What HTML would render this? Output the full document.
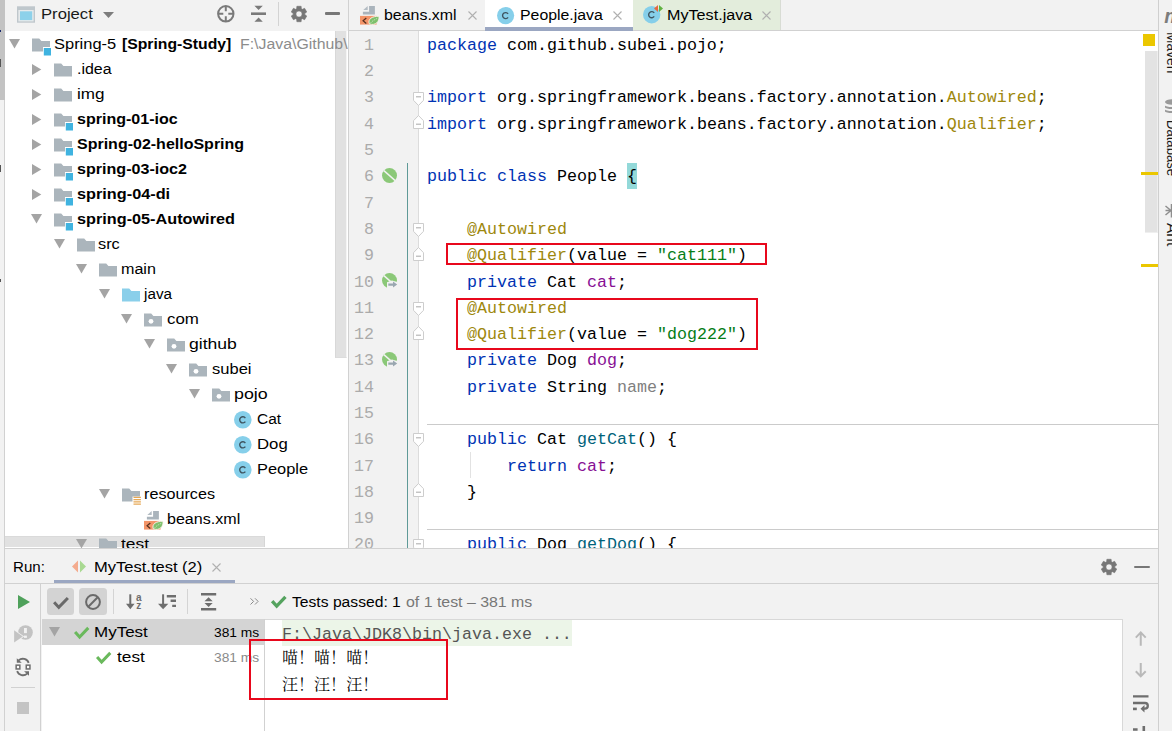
<!DOCTYPE html>
<html lang="zh">
<head>
<meta charset="utf-8">
<title>People.java - Spring-5</title>
<style>
*{box-sizing:border-box;margin:0;padding:0}
html,body{width:1172px;height:731px;overflow:hidden;background:#fff}
body{position:relative;font-family:"Liberation Sans","Noto Sans CJK SC",sans-serif;font-size:15.5px;color:#000}
.abs{position:absolute}
svg{position:absolute;overflow:visible}
/* left strip */
#lstrip{left:0;top:0;width:5px;height:731px;background:#f2f2f2;border-right:1px solid #d1d1d1}
#lstrip .dark{left:0;top:0;width:5px;height:100px;background:#c3c3c3}
/* project panel */
#proj{left:5px;top:0;width:343px;height:548px;background:#fff;overflow:hidden}
#projhead{left:-1px;top:0;width:343px;height:30.7px;background:#f2f2f2}
.row{position:absolute;left:0;width:342px;height:25px;line-height:25px;white-space:nowrap}
.row span.t{position:absolute;top:0}
.tx{position:absolute;white-space:pre;transform-origin:0 50%}
.b{font-weight:bold}
.g{color:#8c8c8c}
/* editor */
#vsep{left:348px;top:0;width:1px;height:548px;background:#d1d1d1}
#tabs{left:349px;top:0;width:809px;height:31px;background:#f2f2f2;border-bottom:1px solid #d1d1d1}
.tab{position:absolute;top:0;height:30px;line-height:29px;white-space:nowrap}
#editor{left:349px;top:31px;width:809px;height:517px;background:#fff;overflow:hidden}
.ln{position:absolute;left:0;width:25px;text-align:right;color:#ababab;font-family:"Liberation Mono",monospace;font-size:16.6px;height:26px;line-height:26px}
.cl{position:absolute;left:78px;white-space:pre;font-family:"Liberation Mono",monospace;font-size:16.67px;height:26px;line-height:26px;color:#000}
.k{color:#0033b3}.a{color:#9e880d}.s{color:#067d17}.f{color:#871094}.m{color:#00627a}.u{color:#808080}
/* right strip */
#rstrip{left:1158px;top:0;width:14px;overflow:hidden;height:731px;background:#f2f2f2;box-shadow:inset 1px 0 0 #cfcfcf}
/* bottom */
#bottom{left:5px;top:548px;width:1153px;height:183px;background:#f2f2f2;box-shadow:inset 0 1px 0 #d1d1d1}
.mono{font-family:"Liberation Mono","Noto Sans CJK SC",monospace}
</style>
</head>
<body>
<div id="lstrip" class="abs"><div class="dark abs"></div><div class="abs" style="left:0;top:29.6px;width:1.2px;height:2.7px;background:#1a2a6c"></div><div class="abs" style="left:0;top:59px;width:1px;height:7.6px;background:#555"></div><div class="abs" style="left:0;top:165px;width:1px;height:7px;background:#555"></div><div class="abs" style="left:0;top:279px;width:1px;height:3px;background:#555"></div></div>

<div id="proj" class="abs">
<div class="abs" style="left:1px;top:0;width:342px;height:548px">
<div id="projhead" class="abs"></div>
<svg style="left:11px;top:6px" width="18" height="17" viewBox="0 0 18 17"><rect x="0" y="0.3" width="18" height="16.4" fill="#bfc7cc"/><rect x="1.4" y="4" width="15.2" height="11.4" fill="#e6eaec"/><rect x="3" y="5.3" width="12.2" height="8.8" fill="#8dd1ea"/></svg><div class="tx" style="left:35.0px;top:-0.9px;height:29px;line-height:29px;font-size:15.5px;transform:scaleX(1.0738);color:#1a1a1a">Project</div><svg style="left:97px;top:12px" width="11" height="6" viewBox="0 0 11 6"><path d="M0 0H11L5.5 6Z" fill="#7d7d7d"/></svg><svg style="left:211.3px;top:5.1px" width="17.6" height="17.6" viewBox="0 0 17.6 17.6"><circle cx="8.8" cy="8.8" r="7.7" fill="none" stroke="#7a7a7a" stroke-width="2"/><path d="M8.8 1V6.3M8.8 11.3V16.6M1 8.8H6.3M11.3 8.8H16.6" stroke="#7a7a7a" stroke-width="2"/></svg><svg style="left:244.6px;top:6px" width="15" height="15.6" viewBox="0 0 15 15.6"><path d="M0 7.7H15" stroke="#7a7a7a" stroke-width="2.6"/><path d="M3.4 -0.2H11.8L7.6 4Z M3.4 15.8H11.8L7.6 11.5Z" fill="#7a7a7a"/></svg><div class="abs" style="left:272px;top:2px;width:1px;height:24px;background:#d3d3d3"></div><svg style="left:285px;top:5.8px" width="16" height="16" viewBox="0 0 16 16"><path d="M5.87 0.29L10.13 0.29L10.37 2.70L11.40 3.30L13.61 2.30L15.74 5.99L13.77 7.40L13.77 8.60L15.74 10.01L13.61 13.70L11.40 12.70L10.37 13.30L10.13 15.71L5.87 15.71L5.63 13.30L4.60 12.70L2.39 13.70L0.26 10.01L2.23 8.60L2.23 7.40L0.26 5.99L2.39 2.30L4.60 3.30L5.63 2.70Z M8 4.9A3.1 3.1 0 1 0 8 11.1A3.1 3.1 0 1 0 8 4.9Z" fill="#777" fill-rule="evenodd" stroke="#777" stroke-width="0.6" stroke-linejoin="round"/></svg><div class="abs" style="left:318.5px;top:12.3px;width:15.2px;height:2.6px;border-radius:1px;background:#777"></div><div class="abs" style="left:329.1px;top:30.7px;width:12px;height:327px;background:#e1e1e1;border-left:0.8px solid #d8d8d8;border-bottom:1.5px solid #dcdcdc;border-right:1.2px solid #f4f4f4"></div>
<svg style="left:3.1px;top:38.8px" width="11" height="9" viewBox="0 0 11 9"><path d="M0 0H11L5.5 9.4Z" fill="#a4a4a4"/></svg><svg style="left:26px;top:37.5px" width="19" height="18" viewBox="0 0 19 18"><path d="M0 0.5H7.2L9.4 3H18V9H11V13.5H0Z" fill="#abb5bc"/><rect x="11.8" y="10" width="7.2" height="7.5" fill="#3fb3e0"/></svg><div class="tx" style="left:48.3px;top:31.4px;height:25px;line-height:25px;font-size:15.5px;transform:scaleX(1.0617)">Spring-5</div><div class="tx" style="left:115.9px;top:31.4px;height:25px;line-height:25px;font-size:15.5px;transform:scaleX(1.0156);font-weight:bold">[Spring-Study]</div><div class="tx" style="left:233.9px;top:31.4px;height:25px;line-height:25px;font-size:15.5px;transform:scaleX(1.0238);color:#8c8c8c">F:\Java\Github\</div>
<svg style="left:26.2px;top:64px" width="9" height="11" viewBox="0 0 9 11"><path d="M0 0V11L9.3 5.5Z" fill="#a4a4a4"/></svg><svg style="left:48px;top:62.5px" width="18" height="14" viewBox="0 0 18 14"><path d="M0 0.5H7.2L9.4 3H18V13.5H0Z" fill="#abb5bc"/></svg><div class="tx" style="left:70.8px;top:56.4px;height:25px;line-height:25px;font-size:15.5px;transform:scaleX(1.0294)">.idea</div>
<svg style="left:26.2px;top:89px" width="9" height="11" viewBox="0 0 9 11"><path d="M0 0V11L9.3 5.5Z" fill="#a4a4a4"/></svg><svg style="left:48px;top:87.5px" width="18" height="14" viewBox="0 0 18 14"><path d="M0 0.5H7.2L9.4 3H18V13.5H0Z" fill="#abb5bc"/></svg><div class="tx" style="left:70.8px;top:81.4px;height:25px;line-height:25px;font-size:15.5px;transform:scaleX(1.1011)">img</div>
<svg style="left:26.2px;top:114px" width="9" height="11" viewBox="0 0 9 11"><path d="M0 0V11L9.3 5.5Z" fill="#a4a4a4"/></svg><svg style="left:48px;top:112.5px" width="19" height="18" viewBox="0 0 19 18"><path d="M0 0.5H7.2L9.4 3H18V9H11V13.5H0Z" fill="#abb5bc"/><rect x="11.8" y="10" width="7.2" height="7.5" fill="#3fb3e0"/></svg><div class="tx" style="left:70.8px;top:106.4px;height:25px;line-height:25px;font-size:15.5px;transform:scaleX(1.0347);font-weight:bold">spring-01-ioc</div>
<svg style="left:26.2px;top:139px" width="9" height="11" viewBox="0 0 9 11"><path d="M0 0V11L9.3 5.5Z" fill="#a4a4a4"/></svg><svg style="left:48px;top:137.5px" width="19" height="18" viewBox="0 0 19 18"><path d="M0 0.5H7.2L9.4 3H18V9H11V13.5H0Z" fill="#abb5bc"/><rect x="11.8" y="10" width="7.2" height="7.5" fill="#3fb3e0"/></svg><div class="tx" style="left:70.6px;top:131.4px;height:25px;line-height:25px;font-size:15.5px;transform:scaleX(1.0321);font-weight:bold">Spring-02-helloSpring</div>
<svg style="left:26.2px;top:164px" width="9" height="11" viewBox="0 0 9 11"><path d="M0 0V11L9.3 5.5Z" fill="#a4a4a4"/></svg><svg style="left:48px;top:162.5px" width="19" height="18" viewBox="0 0 19 18"><path d="M0 0.5H7.2L9.4 3H18V9H11V13.5H0Z" fill="#abb5bc"/><rect x="11.8" y="10" width="7.2" height="7.5" fill="#3fb3e0"/></svg><div class="tx" style="left:70.6px;top:156.4px;height:25px;line-height:25px;font-size:15.5px;transform:scaleX(1.0383);font-weight:bold">spring-03-ioc2</div>
<svg style="left:26.2px;top:189px" width="9" height="11" viewBox="0 0 9 11"><path d="M0 0V11L9.3 5.5Z" fill="#a4a4a4"/></svg><svg style="left:48px;top:187.5px" width="19" height="18" viewBox="0 0 19 18"><path d="M0 0.5H7.2L9.4 3H18V9H11V13.5H0Z" fill="#abb5bc"/><rect x="11.8" y="10" width="7.2" height="7.5" fill="#3fb3e0"/></svg><div class="tx" style="left:70.6px;top:181.4px;height:25px;line-height:25px;font-size:15.5px;transform:scaleX(1.0496);font-weight:bold">spring-04-di</div>
<svg style="left:25.1px;top:213.8px" width="11" height="9" viewBox="0 0 11 9"><path d="M0 0H11L5.5 9.4Z" fill="#a4a4a4"/></svg><svg style="left:48px;top:212.5px" width="19" height="18" viewBox="0 0 19 18"><path d="M0 0.5H7.2L9.4 3H18V9H11V13.5H0Z" fill="#abb5bc"/><rect x="11.8" y="10" width="7.2" height="7.5" fill="#3fb3e0"/></svg><div class="tx" style="left:70.6px;top:206.4px;height:25px;line-height:25px;font-size:15.5px;transform:scaleX(1.0478);font-weight:bold">spring-05-Autowired</div>
<svg style="left:48.1px;top:238.8px" width="11" height="9" viewBox="0 0 11 9"><path d="M0 0H11L5.5 9.4Z" fill="#a4a4a4"/></svg><svg style="left:71px;top:237.5px" width="18" height="14" viewBox="0 0 18 14"><path d="M0 0.5H7.2L9.4 3H18V13.5H0Z" fill="#abb5bc"/></svg><div class="tx" style="left:92.1px;top:231.4px;height:25px;line-height:25px;font-size:15.5px;transform:scaleX(1.0551)">src</div>
<svg style="left:70.1px;top:263.8px" width="11" height="9" viewBox="0 0 11 9"><path d="M0 0H11L5.5 9.4Z" fill="#a4a4a4"/></svg><svg style="left:93px;top:262.5px" width="18" height="14" viewBox="0 0 18 14"><path d="M0 0.5H7.2L9.4 3H18V13.5H0Z" fill="#abb5bc"/></svg><div class="tx" style="left:115.4px;top:256.4px;height:25px;line-height:25px;font-size:15.5px;transform:scaleX(1.0388)">main</div>
<svg style="left:93.1px;top:288.8px" width="11" height="9" viewBox="0 0 11 9"><path d="M0 0H11L5.5 9.4Z" fill="#a4a4a4"/></svg><svg style="left:116px;top:287.5px" width="18" height="14" viewBox="0 0 18 14"><path d="M0 0.5H7.2L9.4 3H18V13.5H0Z" fill="#8acfea"/></svg><div class="tx" style="left:137.6px;top:281.4px;height:25px;line-height:25px;font-size:15.5px;transform:scaleX(0.9847)">java</div>
<svg style="left:115.1px;top:313.8px" width="11" height="9" viewBox="0 0 11 9"><path d="M0 0H11L5.5 9.4Z" fill="#a4a4a4"/></svg><svg style="left:138px;top:312.5px" width="18" height="14" viewBox="0 0 18 14"><path d="M0 0.5H7.2L9.4 3H18V13.5H0Z" fill="#abb5bc"/><circle cx="7" cy="8.3" r="2.4" fill="#fff"/></svg><div class="tx" style="left:160.6px;top:306.4px;height:25px;line-height:25px;font-size:15.5px;transform:scaleX(1.0894)">com</div>
<svg style="left:138.1px;top:338.8px" width="11" height="9" viewBox="0 0 11 9"><path d="M0 0H11L5.5 9.4Z" fill="#a4a4a4"/></svg><svg style="left:161px;top:337.5px" width="18" height="14" viewBox="0 0 18 14"><path d="M0 0.5H7.2L9.4 3H18V13.5H0Z" fill="#abb5bc"/><circle cx="7" cy="8.3" r="2.4" fill="#fff"/></svg><div class="tx" style="left:182.5px;top:331.4px;height:25px;line-height:25px;font-size:15.5px;transform:scaleX(1.1342)">github</div>
<svg style="left:160.1px;top:363.8px" width="11" height="9" viewBox="0 0 11 9"><path d="M0 0H11L5.5 9.4Z" fill="#a4a4a4"/></svg><svg style="left:183px;top:362.5px" width="18" height="14" viewBox="0 0 18 14"><path d="M0 0.5H7.2L9.4 3H18V13.5H0Z" fill="#abb5bc"/><circle cx="7" cy="8.3" r="2.4" fill="#fff"/></svg><div class="tx" style="left:205.5px;top:356.4px;height:25px;line-height:25px;font-size:15.5px;transform:scaleX(1.0660)">subei</div>
<svg style="left:183.1px;top:388.8px" width="11" height="9" viewBox="0 0 11 9"><path d="M0 0H11L5.5 9.4Z" fill="#a4a4a4"/></svg><svg style="left:206px;top:387.5px" width="18" height="14" viewBox="0 0 18 14"><path d="M0 0.5H7.2L9.4 3H18V13.5H0Z" fill="#abb5bc"/><circle cx="7" cy="8.3" r="2.4" fill="#fff"/></svg><div class="tx" style="left:227.7px;top:381.4px;height:25px;line-height:25px;font-size:15.5px;transform:scaleX(1.1500)">pojo</div>
<svg style="left:228px;top:411px" width="17.6" height="17.6" viewBox="0 0 16 16"><circle cx="8" cy="8" r="8" fill="#86cfea"/><path d="M10.3 6.4A2.8 2.8 0 1 0 10.3 9.6" fill="none" stroke="#3f5561" stroke-width="1.3"/></svg><div class="tx" style="left:250.7px;top:406.4px;height:25px;line-height:25px;font-size:15.5px;transform:scaleX(0.9992)">Cat</div>
<svg style="left:228px;top:436px" width="17.6" height="17.6" viewBox="0 0 16 16"><circle cx="8" cy="8" r="8" fill="#86cfea"/><path d="M10.3 6.4A2.8 2.8 0 1 0 10.3 9.6" fill="none" stroke="#3f5561" stroke-width="1.3"/></svg><div class="tx" style="left:250.7px;top:431.4px;height:25px;line-height:25px;font-size:15.5px;transform:scaleX(1.0797)">Dog</div>
<svg style="left:228px;top:461px" width="17.6" height="17.6" viewBox="0 0 16 16"><circle cx="8" cy="8" r="8" fill="#86cfea"/><path d="M10.3 6.4A2.8 2.8 0 1 0 10.3 9.6" fill="none" stroke="#3f5561" stroke-width="1.3"/></svg><div class="tx" style="left:250.7px;top:456.4px;height:25px;line-height:25px;font-size:15.5px;transform:scaleX(1.0567)">People</div>
<svg style="left:93.1px;top:488.8px" width="11" height="9" viewBox="0 0 11 9"><path d="M0 0H11L5.5 9.4Z" fill="#a4a4a4"/></svg><svg style="left:116px;top:487.5px" width="19" height="19" viewBox="0 0 19 19"><path d="M0 0.5H7.2L9.4 3H18V8.5H10.5V13.5H0Z" fill="#abb5bc"/><path d="M11.5 9.3H18.9M11.5 11.6H18.9M11.5 13.9H18.9M11.5 16.2H18.9" stroke="#e6a855" stroke-width="1.3"/></svg><div class="tx" style="left:137.6px;top:481.4px;height:25px;line-height:25px;font-size:15.5px;transform:scaleX(1.0433)">resources</div>
<svg style="left:138px;top:511.2px" width="19.2" height="18.6" viewBox="0 0 19.2 18.6"><path d="M3.3 4.1L7.7 0V4.1Z" fill="#b3bcc3"/><path d="M9.1 0H14.9V8.6H2.9V5.8H9.1Z" fill="#aab4bc"/><rect x="0" y="9.9" width="16.6" height="8.7" fill="#f39468"/><path d="M6.3 12L3.1 14.8L6.3 17.5" fill="none" stroke="#54301f" stroke-width="1.25"/><path d="M9.3 17.9C7.6 13 12 10.3 19 10.2C19.6 15.6 15.6 20 9.3 17.9Z" fill="#7ec06c" stroke="#fdf3ee" stroke-width="0.9"/><path d="M10.3 17.3C12 15.2 14.5 13.6 17.2 12.4" fill="none" stroke="#d6ecd0" stroke-width="0.7" stroke-dasharray="1.6 0.8"/></svg><div class="tx" style="left:160.6px;top:506.4px;height:25px;line-height:25px;font-size:15.5px;transform:scaleX(1.0362)">beans.xml</div>
<div class="abs" style="left:-1px;top:536px;width:260px;height:11px;background:#e1e1e1;border-right:1px solid #d6d6d6;border-top:1px solid #dadada"></div><svg style="left:70.1px;top:538.8px" width="11" height="9" viewBox="0 0 11 9"><path d="M0 0H11L5.5 9.4Z" fill="#a4a4a4"/></svg><svg style="left:93px;top:537.5px" width="18" height="14" viewBox="0 0 18 14"><path d="M0 0.5H7.2L9.4 3H18V13.5H0Z" fill="#abb5bc"/></svg><div class="tx" style="left:115.4px;top:531.4px;height:25px;line-height:25px;font-size:15.5px;transform:scaleX(1.1208)">test</div>
</div>
</div>

<div id="vsep" class="abs"></div>
<div id="tabs" class="abs">
<svg style="left:11px;top:6.3px" width="19.2" height="18.6" viewBox="0 0 19.2 18.6"><path d="M3.3 4.1L7.7 0V4.1Z" fill="#b3bcc3"/><path d="M9.1 0H14.9V8.6H2.9V5.8H9.1Z" fill="#aab4bc"/><rect x="0" y="9.9" width="16.6" height="8.7" fill="#f39468"/><path d="M6.3 12L3.1 14.8L6.3 17.5" fill="none" stroke="#54301f" stroke-width="1.25"/><path d="M9.3 17.9C7.6 13 12 10.3 19 10.2C19.6 15.6 15.6 20 9.3 17.9Z" fill="#7ec06c" stroke="#fdf3ee" stroke-width="0.9"/><path d="M10.3 17.3C12 15.2 14.5 13.6 17.2 12.4" fill="none" stroke="#d6ecd0" stroke-width="0.7" stroke-dasharray="1.6 0.8"/></svg><div class="tx" style="left:34.7px;top:0.0px;height:29px;line-height:29px;font-size:15.5px;transform:scaleX(1.0277)">beans.xml</div><svg style="left:118.5px;top:10.5px" width="9" height="9" viewBox="0 0 9 9"><path d="M0.5 0.5L8.5 8.5M8.5 0.5L0.5 8.5" stroke="#b0b0b0" stroke-width="1.1"/></svg><div class="abs" style="left:136px;top:0;width:147.5px;height:31px;background:#fff;border-bottom:4px solid #9ba7c2"></div><svg style="left:148px;top:6.5px" width="17.2" height="17.2" viewBox="0 0 16 16"><circle cx="8" cy="8" r="8" fill="#86cfea"/><path d="M10.3 6.4A2.8 2.8 0 1 0 10.3 9.6" fill="none" stroke="#3f5561" stroke-width="1.3"/></svg><div class="tx" style="left:171.2px;top:0.0px;height:29px;line-height:29px;font-size:15.5px;transform:scaleX(1.0222)">People.java</div><svg style="left:264px;top:10.5px" width="9" height="9" viewBox="0 0 9 9"><path d="M0.5 0.5L8.5 8.5M8.5 0.5L0.5 8.5" stroke="#b0b0b0" stroke-width="1.1"/></svg><div class="abs" style="left:283.5px;top:0;width:148.5px;height:30px;background:#e3eddc;border-right:1px solid #d8dcd4"></div><svg style="left:294.29999999999995px;top:6px" width="17.4" height="17.4" viewBox="0 0 16 16"><circle cx="8" cy="8" r="8" fill="#86cfea"/><path d="M10.3 6.4A2.8 2.8 0 1 0 10.3 9.6" fill="none" stroke="#3f5561" stroke-width="1.3"/></svg><svg style="left:304.5px;top:4.5px" width="9" height="7" viewBox="0 0 9 7"><path d="M0 3.5L4 0V7Z" fill="#e8683f"/><path d="M9 3.5L5 0V7Z" fill="#5fb23f"/></svg><div class="tx" style="left:318.1px;top:0.0px;height:29px;line-height:29px;font-size:15.5px;transform:scaleX(1.0424)">MyTest.java</div><svg style="left:413px;top:10.5px" width="9" height="9" viewBox="0 0 9 9"><path d="M0.5 0.5L8.5 8.5M8.5 0.5L0.5 8.5" stroke="#b0b0b0" stroke-width="1.1"/></svg>
</div>
<div id="editor" class="abs">
<div class="abs" style="left:0;top:0;width:69px;height:518px;background:#f2f2f2"></div><div class="abs" style="left:57.8px;top:131.8px;width:1.4px;height:387px;background:#5f9a98"></div><svg style="left:32.9px;top:136.8px" width="15" height="15" viewBox="0 0 15 15"><circle cx="7.5" cy="7.5" r="7.5" fill="#8bc878"/><path d="M1.6 2.4L13.2 12.6" stroke="#f2f2f2" stroke-width="1.4"/></svg><svg style="left:32.9px;top:241.9px" width="16" height="15" viewBox="0 0 16 15"><circle cx="7.5" cy="7.5" r="7.5" fill="#8bc878"/><path d="M1.6 2.4L13.2 12.6" stroke="#f2f2f2" stroke-width="1.4"/><path d="M5 16V9.2L10 7.4L16 9.2V16Z" fill="#f2f2f2"/><path d="M6.3 10.6H11V8.6L15.2 11.6L11 14.6V12.7H6.3Z" fill="#9aa7b0"/></svg><svg style="left:32.9px;top:320.7px" width="16" height="15" viewBox="0 0 16 15"><circle cx="7.5" cy="7.5" r="7.5" fill="#8bc878"/><path d="M1.6 2.4L13.2 12.6" stroke="#f2f2f2" stroke-width="1.4"/><path d="M5 16V9.2L10 7.4L16 9.2V16Z" fill="#f2f2f2"/><path d="M6.3 10.6H11V8.6L15.2 11.6L11 14.6V12.7H6.3Z" fill="#9aa7b0"/></svg><div class="abs" style="left:277.8px;top:132.0px;width:10.2px;height:26.2px;background:#93d9d9"></div><div class="ln" style="top:1.90px">1</div><div class="cl" style="top:1.90px"><span class="k">package</span> com.github.subei.pojo;</div>
<div class="ln" style="top:28.19px">2</div><div class="cl" style="top:28.19px"></div>
<div class="ln" style="top:54.48px">3</div><div class="cl" style="top:54.48px"><span class="k">import</span> org.springframework.beans.factory.annotation.<span class="a">Autowired</span>;</div>
<div class="ln" style="top:80.77px">4</div><div class="cl" style="top:80.77px"><span class="k">import</span> org.springframework.beans.factory.annotation.<span class="a">Qualifier</span>;</div>
<div class="ln" style="top:107.06px">5</div><div class="cl" style="top:107.06px"></div>
<div class="ln" style="top:133.35px">6</div><div class="cl" style="top:133.35px"><span class="k">public class</span> People {</div>
<div class="ln" style="top:159.64px">7</div><div class="cl" style="top:159.64px"></div>
<div class="ln" style="top:185.93px">8</div><div class="cl" style="top:185.93px">    <span class="a">@Autowired</span></div>
<div class="ln" style="top:212.22px">9</div><div class="cl" style="top:212.22px">    <span class="a">@Qualifier</span>(value = <span class="s">"cat111"</span>)</div>
<div class="ln" style="top:238.51px">10</div><div class="cl" style="top:238.51px">    <span class="k">private</span> Cat <span class="f">cat</span>;</div>
<div class="ln" style="top:264.80px">11</div><div class="cl" style="top:264.80px">    <span class="a">@Autowired</span></div>
<div class="ln" style="top:291.09px">12</div><div class="cl" style="top:291.09px">    <span class="a">@Qualifier</span>(value = <span class="s">"dog222"</span>)</div>
<div class="ln" style="top:317.38px">13</div><div class="cl" style="top:317.38px">    <span class="k">private</span> Dog <span class="f">dog</span>;</div>
<div class="ln" style="top:343.67px">14</div><div class="cl" style="top:343.67px">    <span class="k">private</span> String <span class="u">name</span>;</div>
<div class="ln" style="top:369.96px">15</div><div class="cl" style="top:369.96px"></div>
<div class="ln" style="top:396.25px">16</div><div class="cl" style="top:396.25px">    <span class="k">public</span> Cat <span class="m">getCat</span>() {</div>
<div class="ln" style="top:422.54px">17</div><div class="cl" style="top:422.54px">        <span class="k">return</span> <span class="f">cat</span>;</div>
<div class="ln" style="top:448.83px">18</div><div class="cl" style="top:448.83px">    }</div>
<div class="ln" style="top:475.12px">19</div><div class="cl" style="top:475.12px"></div>
<div class="ln" style="top:501.41px">20</div><div class="cl" style="top:501.41px">    <span class="k">public</span> Dog <span class="m">getDog</span>() {</div><div class="abs" style="left:69px;top:0;width:1px;height:518px;background:#dcdcdc"></div><div class="abs" style="left:78px;top:393px;width:731px;height:1px;background:#cbcbcb"></div><div class="abs" style="left:78px;top:498px;width:731px;height:1px;background:#cbcbcb"></div><svg style="left:64.2px;top:60.7px" width="11" height="14" viewBox="0 0 11 14"><path d="M0.5 0.5H10.5V8.3L5.5 13.5L0.5 8.3Z" fill="#fff" stroke="#cdcdcd"/><path d="M3 4.8H8" stroke="#b0b0b0" stroke-width="1.1"/></svg><svg style="left:64.2px;top:192.1px" width="11" height="14" viewBox="0 0 11 14"><path d="M0.5 0.5H10.5V8.3L5.5 13.5L0.5 8.3Z" fill="#fff" stroke="#cdcdcd"/><path d="M3 4.8H8" stroke="#b0b0b0" stroke-width="1.1"/></svg><svg style="left:64.2px;top:271.0px" width="11" height="14" viewBox="0 0 11 14"><path d="M0.5 0.5H10.5V8.3L5.5 13.5L0.5 8.3Z" fill="#fff" stroke="#cdcdcd"/><path d="M3 4.8H8" stroke="#b0b0b0" stroke-width="1.1"/></svg><svg style="left:64.2px;top:402.4px" width="11" height="14" viewBox="0 0 11 14"><path d="M0.5 0.5H10.5V8.3L5.5 13.5L0.5 8.3Z" fill="#fff" stroke="#cdcdcd"/><path d="M3 4.8H8" stroke="#b0b0b0" stroke-width="1.1"/></svg><svg style="left:64.2px;top:507.6px" width="11" height="14" viewBox="0 0 11 14"><path d="M0.5 0.5H10.5V8.3L5.5 13.5L0.5 8.3Z" fill="#fff" stroke="#cdcdcd"/><path d="M3 4.8H8" stroke="#b0b0b0" stroke-width="1.1"/></svg><svg style="left:64.2px;top:84.2px" width="11" height="14" viewBox="0 0 11 14"><path d="M0.5 13.5H10.5V5.7L5.5 0.5L0.5 5.7Z" fill="#fff" stroke="#cdcdcd"/><path d="M3 9.2H8" stroke="#b0b0b0" stroke-width="1.1"/></svg><svg style="left:64.2px;top:215.6px" width="11" height="14" viewBox="0 0 11 14"><path d="M0.5 13.5H10.5V5.7L5.5 0.5L0.5 5.7Z" fill="#fff" stroke="#cdcdcd"/><path d="M3 9.2H8" stroke="#b0b0b0" stroke-width="1.1"/></svg><svg style="left:64.2px;top:294.5px" width="11" height="14" viewBox="0 0 11 14"><path d="M0.5 13.5H10.5V5.7L5.5 0.5L0.5 5.7Z" fill="#fff" stroke="#cdcdcd"/><path d="M3 9.2H8" stroke="#b0b0b0" stroke-width="1.1"/></svg><svg style="left:64.2px;top:452.2px" width="11" height="14" viewBox="0 0 11 14"><path d="M0.5 13.5H10.5V5.7L5.5 0.5L0.5 5.7Z" fill="#fff" stroke="#cdcdcd"/><path d="M3 9.2H8" stroke="#b0b0b0" stroke-width="1.1"/></svg><div class="abs" style="left:121px;top:421.3px;width:1px;height:26px;background:#e2e2e2"></div><div class="abs" style="left:794px;top:3px;width:12px;height:12px;background:#ebc700"></div><div class="abs" style="left:796px;top:20px;width:13px;height:182px;background:#e3e3e3;border-right:1.5px solid #efefef;border-bottom:1px solid #efefef"></div><div class="abs" style="left:792px;top:141.3px;width:17px;height:2.3px;background:#ebc700"></div><div class="abs" style="left:792px;top:233.3px;width:17px;height:2.6px;background:#ebc700"></div>
</div>

<div id="rstrip" class="abs">
<div class="abs" style="left:21.6px;top:31.6px;transform-origin:0 0;transform:rotate(90deg) scaleX(0.9852);white-space:nowrap;font-size:14px;line-height:normal;color:#1a1a1a">Maven</div><div class="abs" style="left:21.6px;top:119.8px;transform-origin:0 0;transform:rotate(90deg) scaleX(0.9344);white-space:nowrap;font-size:14px;line-height:normal;color:#1a1a1a">Database</div><div class="abs" style="left:21.6px;top:222.8px;transform-origin:0 0;transform:rotate(90deg) scaleX(1.1040);white-space:nowrap;font-size:14px;line-height:normal;color:#1a1a1a">Ant</div><div class="abs" style="left:6.3px;top:5.3px;font-style:italic;font-weight:bold;color:#7c7c7c;font-size:20px;line-height:22px">m</div><svg style="left:7px;top:99px" width="12" height="15" viewBox="0 0 12 15"><ellipse cx="7" cy="3" rx="7" ry="2.8" fill="#9a9a9a"/><path d="M0 6.2C0 8.6 14 8.6 14 6.2V8.2C14 10.6 0 10.6 0 8.2Z M0 10.2C0 12.6 14 12.6 14 10.2V12.2C14 14.6 0 14.6 0 12.2Z" fill="#9a9a9a"/></svg><svg style="left:7px;top:204px" width="10" height="14" viewBox="0 0 10 14"><path d="M0.5 2L9 9M0.5 6.5H9M0.5 11L9 4M6.5 0V13.5" stroke="#8e8e8e" stroke-width="1.5"/></svg>
</div>

<div id="bottom" class="abs">
<div class="tx" style="left:8.1px;top:1.0px;height:36px;line-height:36px;font-size:15.5px;transform:scaleX(0.9743)">Run:</div><svg style="left:67px;top:12px" width="14" height="13" viewBox="0 0 14 13"><path d="M0 6.5L6 0.5V12.5Z" fill="#f4ab8e"/><path d="M14 6.5L8 0.5V12.5Z" fill="#a9d992"/></svg><div class="tx" style="left:88.7px;top:1.0px;height:36px;line-height:36px;font-size:15.5px;transform:scaleX(1.0656)">MyTest.test (2)</div><svg style="left:207px;top:15px" width="9" height="9" viewBox="0 0 9 9"><path d="M0.5 0.5L8.5 8.5M8.5 0.5L0.5 8.5" stroke="#b0b0b0" stroke-width="1.1"/></svg><div class="abs" style="left:49px;top:32px;width:181px;height:4px;background:#9ba7c2"></div><div class="abs" style="left:0;top:35px;width:1153px;height:1px;background:#d1d1d1"></div><svg style="left:1096px;top:11px" width="16" height="16" viewBox="0 0 16 16"><path d="M5.87 0.29L10.13 0.29L10.37 2.70L11.40 3.30L13.61 2.30L15.74 5.99L13.77 7.40L13.77 8.60L15.74 10.01L13.61 13.70L11.40 12.70L10.37 13.30L10.13 15.71L5.87 15.71L5.63 13.30L4.60 12.70L2.39 13.70L0.26 10.01L2.23 8.60L2.23 7.40L0.26 5.99L2.39 2.30L4.60 3.30L5.63 2.70Z M8 4.9A3.1 3.1 0 1 0 8 11.1A3.1 3.1 0 1 0 8 4.9Z" fill="#777" fill-rule="evenodd" stroke="#777" stroke-width="0.6" stroke-linejoin="round"/></svg><div class="abs" style="left:1129.4px;top:17.799999999999955px;width:15.4px;height:2.5px;border-radius:1px;background:#777"></div><div class="abs" style="left:35px;top:36px;width:1px;height:150px;background:#d1d1d1"></div><svg style="left:13px;top:47px" width="12" height="14" viewBox="0 0 12 14"><path d="M0 0L12 7L0 14Z" fill="#4fa15b"/></svg><svg style="left:9px;top:77px" width="20" height="18" viewBox="0 0 20 18"><circle cx="11.5" cy="7.5" r="7.3" fill="#c3c3c3"/><path d="M0.1 5.3L8.8 11.4L0.1 17.6Z" fill="#c3c3c3" stroke="#f2f2f2" stroke-width="1.6" paint-order="stroke"/><rect x="10" y="3" width="2.9" height="5.1" fill="#f2f2f2"/><rect x="10" y="10.6" width="2.9" height="2.3" fill="#f2f2f2"/></svg><svg style="left:10px;top:109px" width="16" height="19" viewBox="0 0 16 19"><path d="M13.7 5.9A6.3 6.3 0 0 0 3.6 3.4M2.1 14.1A6.3 6.3 0 0 0 12.2 16.6" fill="none" stroke="#6e6e6e" stroke-width="1.8"/><path d="M1.8 1.2V5.8H6.75ZM14 18.8V14.2H9.05Z" fill="#6e6e6e"/><rect x="1.15" y="8.15" width="3.7" height="3.8" fill="#fbfbfb" stroke="#6e6e6e" stroke-width="1.5"/><rect x="11.25" y="8.15" width="3.7" height="3.8" fill="#fbfbfb" stroke="#6e6e6e" stroke-width="1.5"/></svg><div class="abs" style="left:6px;top:139px;width:24px;height:1px;background:#d1d1d1"></div><div class="abs" style="left:12px;top:154px;width:12px;height:12px;background:#c4c4c4"></div><div class="abs" style="left:42px;top:39.60000000000002px;width:27.2px;height:27.4px;background:#d3d3d3;border-radius:3.5px"></div><div class="abs" style="left:74px;top:39.60000000000002px;width:28.2px;height:27.4px;background:#d3d3d3;border-radius:3.5px"></div><svg style="left:48.4px;top:48.6px" width="16" height="12.5" viewBox="0 0 15.4 12"><path d="M1.1 5.0L5.6 10.0L14.3 0.9" fill="none" stroke="#696969" stroke-width="2.9"/></svg><svg style="left:80px;top:46px" width="16" height="16" viewBox="0 0 16 16"><circle cx="8" cy="8" r="6.9" fill="none" stroke="#6a6a6a" stroke-width="2"/><path d="M3.3 12.7L12.7 3.3" stroke="#6a6a6a" stroke-width="2"/></svg><div class="abs" style="left:108px;top:41px;width:1px;height:25px;background:#d4d4d4"></div><svg style="left:121px;top:46px" width="17" height="16" viewBox="0 0 17 16"><path d="M4.3 0.3V11" fill="none" stroke="#6e6e6e" stroke-width="2"/><path d="M0 9.8H8.6L4.3 15.2Z" fill="#6e6e6e"/><text x="12.7" y="6.6" font-size="10" text-anchor="middle" fill="#6e6e6e" font-weight="bold" font-family="Liberation Sans, sans-serif">a</text><text x="12.7" y="15.2" font-size="10" text-anchor="middle" fill="#6e6e6e" font-weight="bold" font-family="Liberation Sans, sans-serif">z</text></svg><svg style="left:153.4px;top:46px" width="18" height="16" viewBox="0 0 18 16"><path d="M5.1 0.3V11" fill="none" stroke="#6e6e6e" stroke-width="2"/><path d="M0 9.8H10.3L5.1 15.2Z" fill="#6e6e6e"/><path d="M8.8 2.2H18M12.6 6.7H18M14.2 11.9H18" stroke="#6e6e6e" stroke-width="2.4"/></svg><div class="abs" style="left:182px;top:41px;width:1px;height:25px;background:#d4d4d4"></div><svg style="left:195.5px;top:45.200000000000045px" width="15.2" height="17.8" viewBox="0 0 15.2 17.8"><path d="M0 1.3H15.2M0 16.3H15.2" stroke="#6e6e6e" stroke-width="2.5"/><path d="M3.5 8.2L7.6 4.2L11.7 8.2ZM3.5 10.1L7.6 14.1L11.7 10.1Z" fill="#6e6e6e"/></svg><svg style="left:244.7px;top:49.799999999999955px" width="9" height="7" viewBox="0 0 9 7"><path d="M0.5 0.3L3.6 3.4L0.5 6.5M5 0.3L8.1 3.4L5 6.5" fill="none" stroke="#8a8a8a" stroke-width="1"/></svg><svg style="left:265.7px;top:47.8px" width="15.6" height="12.1" viewBox="0 0 15.4 12"><path d="M1.1 5.0L5.6 10.0L14.3 0.9" fill="none" stroke="#55a35f" stroke-width="3.3"/></svg><div class="tx" style="left:286.7px;top:36.0px;height:35px;line-height:35px;font-size:15.5px;transform:scaleX(1.0102)">Tests passed: 1</div><div class="tx" style="left:401.2px;top:36.0px;height:35px;line-height:35px;font-size:15.5px;transform:scaleX(1.0251);color:#777">of 1 test – 381 ms</div><div class="abs" style="left:37px;top:71px;width:222px;height:112px;background:#fff"></div><div class="abs" style="left:37px;top:71px;width:222px;height:26px;background:#d4d4d4"></div><svg style="left:44.3px;top:78.5px" width="11" height="9" viewBox="0 0 11 9"><path d="M0 0H11L5.5 9.4Z" fill="#a4a4a4"/></svg><svg style="left:68.8px;top:79.0px" width="15.4" height="12" viewBox="0 0 15.4 12"><path d="M1.1 5.0L5.6 10.0L14.3 0.9" fill="none" stroke="#6ab95c" stroke-width="3.0"/></svg><div class="tx" style="left:88.7px;top:70.3px;height:27px;line-height:27px;font-size:15.5px;transform:scaleX(1.0960)">MyTest</div><div class="tx" style="left:208.9px;top:70.5px;height:27px;line-height:27px;font-size:13px;transform:scaleX(1.0603)">381 ms</div><svg style="left:90.7px;top:103.8px" width="15.4" height="12" viewBox="0 0 15.4 12"><path d="M1.1 5.0L5.6 10.0L14.3 0.9" fill="none" stroke="#6ab95c" stroke-width="3.0"/></svg><div class="tx" style="left:111.7px;top:96.2px;height:25px;line-height:25px;font-size:15.5px;transform:scaleX(1.1128)">test</div><div class="tx" style="left:208.9px;top:96.5px;height:25px;line-height:25px;font-size:13px;transform:scaleX(1.0603);color:#8a8a8a">381 ms</div><div class="abs" style="left:259px;top:71px;width:1px;height:112px;background:#d1d1d1"></div><div class="abs" style="left:260px;top:71px;width:858px;height:112px;background:#fff;border-top:1px solid #d8d8d8;border-right:1px solid #d8d8d8"></div><div class="abs mono" style="left:277px;top:72.20000000000005px;height:25.6px;line-height:29.6px;font-size:16.67px;background:#ecf5e8;color:#555;white-space:pre">F:\Java\JDK8\bin\java.exe ...</div><div class="abs" style="left:277px;top:96.70000000000005px;height:26px;line-height:26px;font-size:16.05px;white-space:pre;font-family:'Liberation Serif','Noto Serif CJK SC','Noto Sans CJK SC',serif;color:#000">喵！喵！喵！</div><div class="abs" style="left:277px;top:123.79999999999995px;height:26px;line-height:26px;font-size:16.05px;white-space:pre;font-family:'Liberation Serif','Noto Serif CJK SC','Noto Sans CJK SC',serif;color:#000">汪！汪！汪！</div><svg style="left:1130.2px;top:82.70000000000005px" width="11.5" height="14.8" viewBox="0 0 11.5 14.8"><path d="M5.75 14.8V1.4M0.8 6.6L5.75 1.4L10.7 6.6" fill="none" stroke="#b9b9b9" stroke-width="2"/></svg><svg style="left:1130.2px;top:114.60000000000002px" width="11.5" height="14.8" viewBox="0 0 11.5 14.8"><path d="M5.75 0V13.4M0.8 8.2L5.75 13.4L10.7 8.2" fill="none" stroke="#b9b9b9" stroke-width="2"/></svg><svg style="left:1128.2px;top:147.29999999999995px" width="16" height="17" viewBox="0 0 16 17"><path d="M0 1.3H15.5M0 8H12A2.7 2.7 0 0 1 12 13.6H9" fill="none" stroke="#6e6e6e" stroke-width="2.3"/><path d="M11.5 10L7.5 13.8L11.5 17.4Z" fill="#6e6e6e"/><rect x="0" y="12.6" width="3.8" height="2.6" fill="#6e6e6e"/></svg><svg style="left:1128.2px;top:178px" width="16" height="6" viewBox="0 0 16 6"><path d="M0 3.5H4.6M10.8 0V6" stroke="#6e6e6e" stroke-width="2.6" fill="none"/></svg>
</div>
<div class="abs" style="left:446px;top:243px;width:321px;height:22px;border:2px solid #e8081c"></div><div class="abs" style="left:456px;top:298px;width:302px;height:52px;border:2px solid #e8081c"></div><div class="abs" style="left:249px;top:639px;width:199px;height:61px;border:2px solid #e8081c"></div>
</body>
</html>
